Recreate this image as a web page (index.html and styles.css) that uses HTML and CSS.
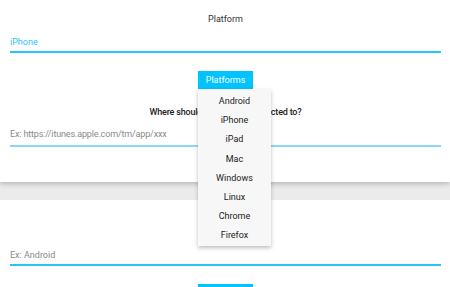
FILE: index.html
```html
<!DOCTYPE html>
<html>
<head>
<meta charset="utf-8">
<link rel="stylesheet" href="styles.css">
</head>
<body>
  <section class="card">
    <div class="title">Platform</div>
    <div class="field focused">iPhone</div>
    <div class="btn-row">
      <div class="menu-anchor">
        <div class="btn">Platforms</div>
        <ul class="menu">
          <li>Android</li>
          <li>iPhone</li>
          <li>iPad</li>
          <li>Mac</li>
          <li>Windows</li>
          <li>Linux</li>
          <li>Chrome</li>
          <li>Firefox</li>
        </ul>
      </div>
    </div>
    <div class="question">Where should the user be redirected to?</div>
    <div class="field light placeholder">Ex: https://itunes.apple.com/tm/app/xxx</div>
  </section>
  <section class="card second">
    <div class="title">Platform</div>
    <div class="field placeholder spaced">Ex: Android</div>
    <div class="btn-row">
      <div class="btn">Platforms</div>
    </div>
  </section>
</body>
</html>
```
FILE: styles.css
```css
* { box-sizing: border-box; }
html, body { margin: 0; padding: 0; }
body {
  width: 450px;
  height: 287px;
  overflow: hidden;
  background: #ebebeb;
  font-family: Roboto, "Liberation Sans", sans-serif;
  font-size: 9px;
  color: #333;
}
.card {
  background: #fff;
  padding: 13px 9px 35px 10px;
  box-shadow: 0 2px 5px rgba(0,0,0,0.22);
  position: relative;
}
.card.second {
  margin-top: 18px;
  box-shadow: none;
  padding-bottom: 20px;
}
.title {
  text-align: center;
  line-height: 12px;
  color: #333;
}
.field {
  margin-top: 11px;
  line-height: 12px;
  padding-bottom: 3px;
  border-bottom: 1px solid #29c5f6;
}
.field.focused {
  color: #29c5f6;
  border-bottom: 2px solid #29c5f6;
}
.field.light {
  margin-top: 10px;
  padding-bottom: 5px;
  border-bottom: 2px solid #86daf6;
  letter-spacing: -0.15px;
}
.field.spaced {
  margin-top: 24px;
  padding-bottom: 3px;
  border-bottom: 2px solid #29c5f6;
}
.placeholder { color: #8a8a8a; }
.btn-row {
  display: flex;
  margin-top: 18px;
  padding-left: 188px;
}
.menu-anchor { position: relative; }
.btn {
  width: 55px;
  height: 18px;
  line-height: 18px;
  background: #00c3ff;
  color: #fff;
  text-align: center;
}
.menu {
  position: absolute;
  top: 18px;
  left: 0;
  width: 73px;
  margin: 0;
  padding: 3px 0 0;
  list-style: none;
  background: #f7f7f7;
  box-shadow: 0 2px 4px rgba(0,0,0,0.25);
  z-index: 5;
}
.menu li {
  height: 19.2px;
  line-height: 19.2px;
  text-align: center;
  color: #222;
}
.question {
  margin-top: 17px;
  line-height: 12px;
  text-align: center;
  font-weight: 500;
  color: #222;
  letter-spacing: -0.2px;
}
```
